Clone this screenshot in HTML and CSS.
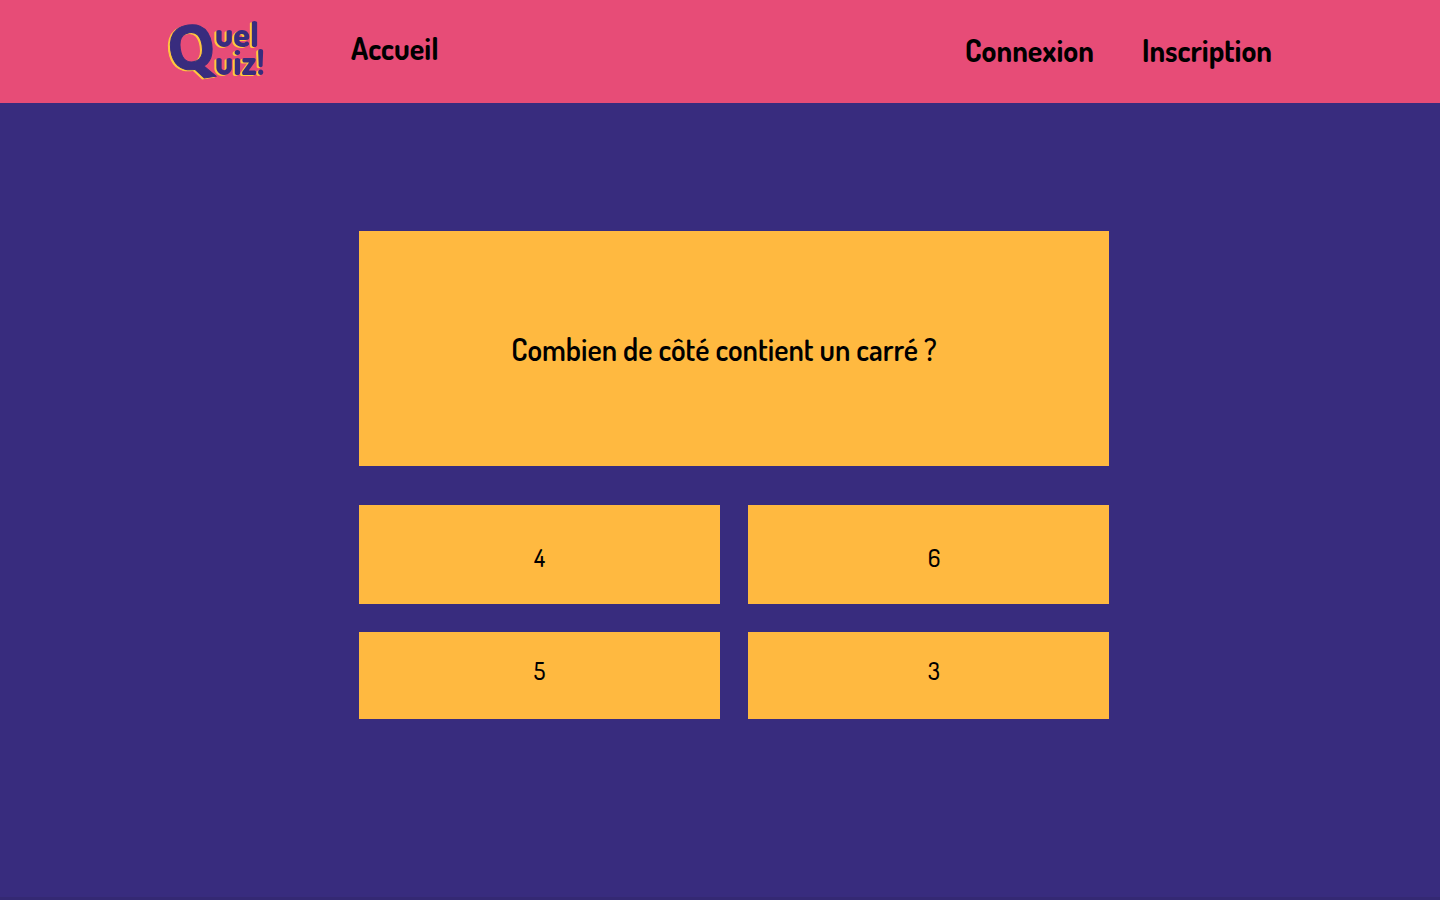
FILE: index.html
```html
<!DOCTYPE html>
<html lang="fr">
<head>
<meta charset="utf-8">
<meta name="viewport" content="width=device-width, initial-scale=1">
<title>Quel Quiz!</title>
<link rel="stylesheet" href="styles.css">
</head>
<body>
<header class="header">
  <nav class="nav">
    <a class="logo" href="#" aria-label="Quel Quiz!">
      <svg class="logo-art" width="104" height="72" viewBox="0 0 104 72" aria-hidden="true">
        <text class="logo-q" x="-1" y="53" transform="rotate(-8 24 32)">Q</text>
        <text class="logo-word" x="47" y="31">uel</text>
        <text class="logo-word" x="47" y="59">uiz!</text>
      </svg>
    </a>
    <a class="link link-home" href="#">Accueil</a>
    <div class="account">
      <a class="link" href="#">Connexion</a>
      <a class="link" href="#">Inscription</a>
    </div>
  </nav>
</header>
<main class="main">
  <section class="quiz">
    <h1 class="question">Combien de côté contient un carré ?</h1>
    <div class="answers">
      <button class="answer answer-top" type="button">4</button>
      <button class="answer answer-top answer-right" type="button">6</button>
      <button class="answer answer-bottom" type="button">5</button>
      <button class="answer answer-bottom answer-right" type="button">3</button>
    </div>
  </section>
</main>
</body>
</html>
```
FILE: styles.css
```css
* { box-sizing: border-box; }

body {
  display: flex;
  flex-direction: column;
  min-height: 100vh;
  margin: 0;
  background: #382c7e;
  border-bottom: 3px solid #342973;
  color: #000;
  font-family: Dosis, Lato, sans-serif;
}

.header { background: #e74c77; }

.nav {
  display: flex;
  align-items: center;
  min-height: 103px;
  padding: 0 168px;
}

.logo { margin-right: 79px; }

.logo-art {
  display: block;
  overflow: visible;
  fill: #382c7e;
  filter: drop-shadow(-2px 1px 0 #ffc83d);
}

.logo-q {
  font-family: "Open Sans", sans-serif;
  font-size: 61px;
  font-weight: 700;
  stroke: #382c7e;
  stroke-width: 1px;
}

.logo-word {
  font-family: Dosis, Lato, sans-serif;
  font-size: 34px;
  font-weight: 800;
}

.link {
  padding-bottom: 4px;
  color: inherit;
  font-size: 30px;
  font-weight: 700;
  line-height: 36px;
  text-decoration: none;
}

.link-home { padding-bottom: 8px; }

.account {
  display: flex;
  gap: 48px;
  margin-left: auto;
}

.main {
  display: flex;
  justify-content: center;
  padding: 128px 0 0 28px;
}

.quiz {
  width: 100%;
  max-width: 750px;
}

.question {
  display: flex;
  align-items: center;
  justify-content: center;
  min-height: 235px;
  margin: 0 0 39px;
  padding: 0 20px 0 0;
  background: #ffb940;
  font-size: 30px;
  font-weight: 600;
  line-height: 36px;
}

.answers {
  display: grid;
  grid-template-columns: 1fr 1fr;
  gap: 28px;
}

.answer {
  padding: 0;
  border: 0;
  background: #ffb940;
  color: inherit;
  font-family: inherit;
  font-size: 24px;
  font-weight: 500;
  line-height: 32px;
}

.answer-top {
  min-height: 99px;
  padding-top: 7px;
}

.answer-bottom {
  min-height: 87px;
  padding-bottom: 9px;
}

.answer-right { padding-left: 11px; }
```
